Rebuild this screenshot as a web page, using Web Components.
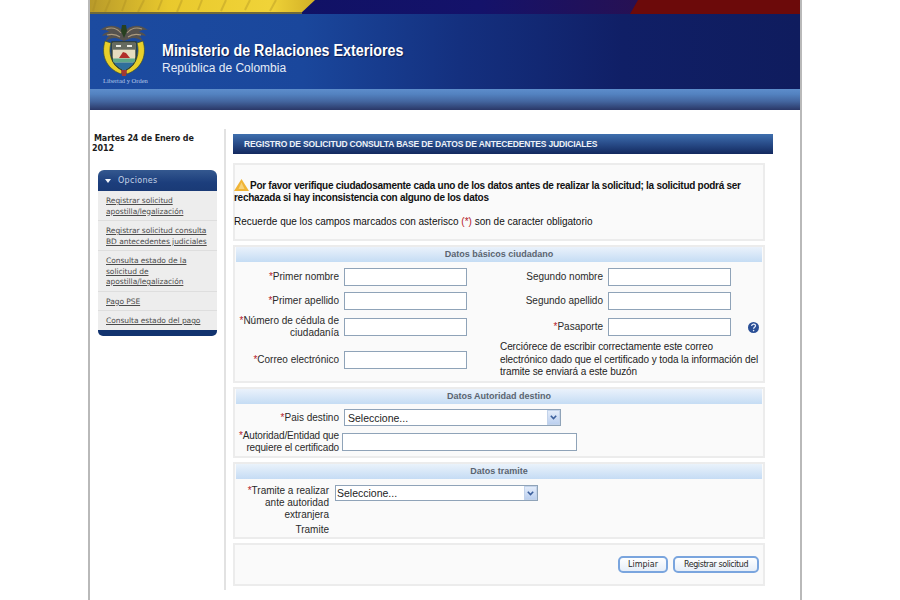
<!DOCTYPE html>
<html lang="es">
<head>
<meta charset="utf-8">
<title>Ministerio de Relaciones Exteriores</title>
<style>
  html, body { margin: 0; padding: 0; background: #fff; overflow: hidden; }
  body { font: 10px "Liberation Sans", Arial, sans-serif; color: #222; }
</style>
</head>
<body>
<gov-page>
  <gov-header slot="header"></gov-header>
  <div slot="aside">
    <date-line>Martes 24 de Enero de 2012</date-line>
    <side-menu>
      <menu-item>Registrar solicitud apostilla/legalización</menu-item>
      <menu-item>Registrar solicitud consulta BD antecedentes judiciales</menu-item>
      <menu-item>Consulta estado de la solicitud de apostilla/legalización</menu-item>
      <menu-item>Pago PSE</menu-item>
      <menu-item>Consulta estado del pago</menu-item>
    </side-menu>
  </div>
  <solicitud-form slot="main"></solicitud-form>
</gov-page>

<script>
class GovPage extends HTMLElement {
  connectedCallback() {
    this.attachShadow({ mode: 'open' });
    this.shadowRoot.innerHTML = `
      <style>
        :host { display: block; width: 710px; height: 600px; margin-left: 88px; border-left: 2px solid #b9b9b9; border-right: 2px solid #b9b9b9; }
        .body { display: flex; padding-top: 19px; }
        .aside { width: 134px; height: 461px; border-right: 2px solid #e2e2e2; flex: none; }
        .main { padding: 5px 0 0 7px; flex: 1; }
      </style>
      <slot name="header"></slot>
      <div class="body">
        <div class="aside"><slot name="aside"></slot></div>
        <div class="main"><slot name="main"></slot></div>
      </div>
    `;
  }
}

class GovHeader extends HTMLElement {
  connectedCallback() {
    this.attachShadow({ mode: 'open' });
    this.shadowRoot.innerHTML = `
      <style>
        :host { display: block; height: 110px; }
        .band { display: block; width: 710px; height: 14px; }
        .main { height: 75px; box-sizing: border-box; display: flex; background: linear-gradient(90deg, #1c4ba0 0, #1a479c 30%, #14307f 52%, #101f66 75%, #0f1c5e 100%); }
        .logo { width: 72px; flex: none; padding: 8px 0 0 9px; box-sizing: border-box; }
        .logo svg { display: block; }
        .motto { display: block; width: 60px; font: 6.500px/7px "Liberation Serif", serif; color: #b4c8ea; margin: -3px 0 0 4px; white-space: nowrap; }
        .names { padding-top: 27px; color: #fff; }
        .names b { display: block; font: bold 16px/20px "Liberation Sans", sans-serif; text-shadow: 1px 1px 1px #0b1a4c; white-space: nowrap; transform: scaleX(.893); transform-origin: left; }
        .names span { display: block; font: 12px/15px "Liberation Sans", sans-serif; color: #e6ecf7; }
        .bar { height: 21px; background: linear-gradient(#5d8dcb 0, #5382c0 25%, #43659e 60%, #2a3767 100%); }
      </style>
      <svg class="band" viewBox="0 0 710 14" preserveAspectRatio="none">
        <defs>
          <linearGradient id="navy" x1="0" x2="1"><stop offset="0" stop-color="#0c1160"/><stop offset=".55" stop-color="#14126a"/><stop offset="1" stop-color="#3a0f3c"/></linearGradient>
          <linearGradient id="gold" x1="0" x2="1"><stop offset="0" stop-color="#b89a2a"/><stop offset=".35" stop-color="#e9c92d"/><stop offset=".8" stop-color="#f0d338"/><stop offset="1" stop-color="#d2b026"/></linearGradient>
        </defs>
        <rect width="710" height="14" fill="url(#navy)"/>
        <polygon points="0,0 225,0 210,14 0,14" fill="url(#gold)"/>
        <polygon points="548,0 710,0 710,14 540,14" fill="#6c0a0a"/>
        <path d="M6 0l-3 11M20 0l-5 12M36 0l-4 11M54 0l-6 12M72 0l-4 10M92 0l-5 12M112 0l-4 10M136 0l-5 11M160 0l-5 10M186 0l-6 11" stroke="#a78a22" stroke-width="2" opacity=".35"/>
        <rect y="12" width="212" height="2" fill="#6f6a3a"/>
      </svg>
      <div class="main">
        <div class="logo">
          <svg width="50" height="58" viewBox="0 0 50 58">
            <path d="M25 10C19 2 9 2 1 8c4-.5 7 0 9 2-3 0-5 1-7 4 3-1 5-1 7 0-2 1-3 3-3 5 4-3 9-4 13-2l5 2 5-2c4-2 9-1 13 2 0-2-1-4-3-5 2-1 4-1 7 0-2-3-4-4-7-4 2-2 5-2.500 9-2-8-6-18-6-24 2z" fill="#55524e"/>
            <path d="M7 7c5-2 11-1 15 4M43 7c-5-2-11-1-15 4M8 13c4-1 9-1 13 2M42 13c-4-1-9-1-13 2" stroke="#ab9a7e" stroke-width="1.100" fill="none"/>
            <path d="M23 3h4l1 6-3 7-3-7z" fill="#27401f"/>
            <path d="M6 19C2 32 6 46 22 52l2-3C12 43 9 31 12 21z" fill="#e8cf2a" stroke="#3d4f2a" stroke-width=".7"/>
            <path d="M44 19c4 13 0 27-16 33l-2-3c12-6 15-18 12-28z" fill="#e8cf2a" stroke="#3d4f2a" stroke-width=".7"/>
            <path d="M13 20h24v15c0 7-6 11-12 14-6-3-12-7-12-14z" fill="#e6dcc0" stroke="#2f3a2a" stroke-width="1.300"/>
            <rect x="13.700" y="20.700" width="22.600" height="7" fill="#666b60"/>
            <path d="M17 24h5M28 24h5" stroke="#ecebe2" stroke-width="2"/>
            <path d="M20 36l4-6 3 1 4 5z" fill="#b22f2b"/>
            <path d="M13.700 36.500h22.600c0 1.500-.3 2.500-1 4h-20.600c-.7-1.500-1-2.500-1-4z" fill="#5fa88a"/>
            <path d="M15 40.500h20c-2 3.500-6 6-10 8-4-2-8-4.500-10-8z" fill="#2f6f9c"/>
            <path d="M22 48h6l-1 6h-4z" fill="#a33a35"/>
          </svg>
          <span class="motto">Libertad y Orden</span>
        </div>
        <div class="names">
          <b>Ministerio de Relaciones Exteriores</b>
          <span>República de Colombia</span>
        </div>
      </div>
      <div class="bar"></div>
    `;
  }
}

class DateLine extends HTMLElement {
  connectedCallback() {
    this.attachShadow({ mode: 'open' });
    this.shadowRoot.innerHTML = `
      <style>
        :host { display: block; padding: 5px 0 0 2px; width: 118px; text-indent: 2px; font: bold 8px/10px "DejaVu Sans", sans-serif; letter-spacing: -.1px; color: #1c1c1c; margin-bottom: 16px; }
      </style>
      <slot></slot>
    `;
  }
}

class SideMenu extends HTMLElement {
  connectedCallback() {
    this.attachShadow({ mode: 'open' });
    this.shadowRoot.innerHTML = `
      <style>
        :host { display: block; width: 119px; margin-left: 8px; }
        .head { height: 21px; border-radius: 6px 6px 0 0; background: linear-gradient(#34588f, #1c3e7c 60%, #1a3a76); display: flex; align-items: center; gap: 7px; padding-left: 7px; color: #c5d2e6; font: 8px "DejaVu Sans", sans-serif; letter-spacing: .3px; }
        .tri { width: 0; height: 0; border: 3.500px solid transparent; border-top: 4px solid #f2f5fa; border-bottom: 0; }
        .foot { height: 6px; border-radius: 0 0 5px 5px; background: #12336f; }
      </style>
      <div class="head"><span class="tri"></span><span>Opciones</span></div>
      <slot></slot>
      <div class="foot"></div>
    `;
  }
}

class MenuItem extends HTMLElement {
  connectedCallback() {
    this.attachShadow({ mode: 'open' });
    this.shadowRoot.innerHTML = `
      <style>
        :host { display: block; box-sizing: border-box; background: #ededed; border-bottom: 1px solid #dedede; padding: 5px 8px 3px 8px; font: 7.500px/10.500px "DejaVu Sans", sans-serif; letter-spacing: -.05px; color: #4c4c4c; text-decoration: underline; }
        :host(:last-of-type) { border-bottom: 0; }
      </style>
      <slot></slot>
    `;
  }
}

class FormPanel extends HTMLElement {
  connectedCallback() {
    this.attachShadow({ mode: 'open' });
    const title = this.getAttribute('heading');
    this.shadowRoot.innerHTML = `
      <style>
        :host { display: block; width: 532px; box-sizing: border-box; background: #fafafa; border: 2px solid #ececec; margin-bottom: 4px; }
        .head { height: 15px; margin: 0 1px; background: linear-gradient(#eaf2fb, #c5dcf4); color: #5a6470; font: bold 9px/15px "Liberation Sans", sans-serif; text-align: center; }
      </style>
      ${title ? `<div class="head">${title}</div>` : ''}
      <slot></slot>
    `;
  }
}

class TextBox extends HTMLElement {
  connectedCallback() {
    this.attachShadow({ mode: 'open' });
    this.shadowRoot.innerHTML = `
      <style>
        :host { display: block; width: var(--w, 123px); }
        input { display: block; box-sizing: border-box; width: 100%; height: 18px; margin: 0; padding: 0 3px; background: #fff; border: 1px solid #8fa3b8; border-radius: 0; outline: 0; font: 10px "Liberation Sans", sans-serif; }
      </style>
      <input type="text">
    `;
  }
}

class ComboBox extends HTMLElement {
  connectedCallback() {
    this.attachShadow({ mode: 'open' });
    this.shadowRoot.innerHTML = `
      <style>
        :host { display: block; position: relative; width: var(--w, 217px); height: var(--h, 17px); }
        select { display: block; box-sizing: border-box; width: 100%; height: 100%; margin: 0; padding: 0 0 0 var(--pad, 3px); appearance: none; background: #fff; border: 1px solid #8fa3b8; border-radius: 0; font: 10.500px "Liberation Sans", sans-serif; color: #222; }
        .btn { position: absolute; top: 1px; right: 1px; bottom: 1px; width: 13px; background: linear-gradient(#e3ecfa, #bcd0ef); border: 1px solid #c3d3ea; box-sizing: border-box; display: flex; align-items: center; justify-content: center; }
      </style>
      <select><option>Seleccione...</option></select>
      <span class="btn"><svg width="7" height="5" viewBox="0 0 7 5"><path d="M.8.8l2.700 2.700L6.200.8" fill="none" stroke="#3c5f9c" stroke-width="1.600"/></svg></span>
    `;
  }
}

class FieldLabel extends HTMLElement {
  connectedCallback() {
    this.attachShadow({ mode: 'open' });
    const star = this.hasAttribute('required') ? '<span class="star">*</span>' : '';
    this.shadowRoot.innerHTML = `
      <style>
        :host { display: block; text-align: right; font: 10px/12px "Liberation Sans", sans-serif; color: #2a2a2a; }
        .star { color: #b3202a; }
      </style>
      ${star}<slot></slot>
    `;
  }
}

class PillButton extends HTMLElement {
  connectedCallback() {
    this.attachShadow({ mode: 'open' });
    this.shadowRoot.innerHTML = `
      <style>
        :host { display: block; }
        button { display: block; box-sizing: border-box; width: var(--w, 50px); height: 17px; padding: 0; background: linear-gradient(#fff, #e6eef8); border: 2px solid #7aa5de; border-radius: 5px; font: 8px "DejaVu Sans", sans-serif; letter-spacing: var(--ls, 0); color: #2a2a2a; }
      </style>
      <button type="button"><slot></slot></button>
    `;
  }
}

class SolicitudForm extends HTMLElement {
  connectedCallback() {
    this.attachShadow({ mode: 'open' });
    this.shadowRoot.innerHTML = `
      <style>
        :host { display: block; }
        .title { width: 540px; height: 20px; margin-bottom: 9px; box-sizing: border-box; padding-left: 11px; background: linear-gradient(#3f6fae, #2a4f8c 45%, #13295f); color: #eef2f8; font: bold 8.500px/20px "Liberation Sans", sans-serif; letter-spacing: -.16px; white-space: nowrap; }
        .notice { height: 74px; padding: 14px 0 0; margin-left: -1px; box-sizing: border-box; font-size: 10px; line-height: 12px; color: #111; }
        .notice b { display: block; margin-bottom: 12px; letter-spacing: -.27px; }
        .notice svg { vertical-align: -2px; margin-right: 1px; }
        .notice em { color: #b3202a; font-style: normal; }
        .basic { display: grid; grid-template-columns: 103px 123px 131px 123px 1fr; grid-template-rows: 24px 23px 30px 36px; column-gap: 5px; align-items: center; padding: 3px 1px; }
        .note { grid-column: 3 / 6; padding-left: 28px; font-size: 10px; line-height: 12.500px; letter-spacing: -.08px; color: #222; }
        .help { margin-left: 12px; }
        .auth { display: grid; grid-template-columns: 103px 1fr; grid-template-rows: 21px 28px; column-gap: 5px; align-items: center; padding: 3px 1px 0; }
        .auth .wide { margin-left: -2px; }
        .auth .tight { letter-spacing: -.13px; }
        .tram { display: grid; grid-template-columns: 93px 1fr; grid-template-rows: 36px 12px; row-gap: 3px; column-gap: 6px; padding: 6px 1px 1px; }
        .tram .lab2 { grid-column: 1; }
        .actions { height: 39px; display: flex; justify-content: flex-end; align-items: flex-start; gap: 5px; padding: 11px 4px 0 0; box-sizing: border-box; }
      </style>
      <div class="title">REGISTRO DE SOLICITUD CONSULTA BASE DE DATOS DE ANTECEDENTES JUDICIALES</div>
      <form-panel>
        <div class="notice">
          <b><svg width="15" height="12" viewBox="0 0 15 12"><path d="M7.500 0L15 12H0z" fill="#f0b436"/><path d="M7.500 3.500L10.500 10h-6z" fill="#f7d27a"/></svg>Por favor verifique ciudadosamente cada uno de los datos antes de realizar la solicitud; la solicitud podrá ser rechazada si hay inconsistencia con alguno de los datos</b>
          Recuerde que los campos marcados con asterisco <em>(*)</em> son de caracter obligatorio
        </div>
      </form-panel>
      <form-panel heading="Datos básicos ciudadano">
        <div class="basic">
          <field-label required>Primer nombre</field-label><text-box></text-box>
          <field-label>Segundo nombre</field-label><text-box></text-box><span></span>
          <field-label required>Primer apellido</field-label><text-box></text-box>
          <field-label>Segundo apellido</field-label><text-box></text-box><span></span>
          <field-label required>Número de cédula de ciudadanía</field-label><text-box></text-box>
          <field-label required>Pasaporte</field-label><text-box></text-box>
          <svg class="help" width="11" height="11" viewBox="0 0 11 11"><circle cx="5.500" cy="5.500" r="5.500" fill="#2a4f96"/><path d="M3.600 4c.2-2.400 3.900-2.400 3.900-.2 0 1.500-1.900 1.500-1.900 3" fill="none" stroke="#e8eefb" stroke-width="1.300"/><circle cx="5.600" cy="8.600" r=".8" fill="#e8eefb"/></svg>
          <field-label required>Correo electrónico</field-label><text-box></text-box>
          <div class="note">Cerciórece de escribir correctamente este correo electrónico dado que el certificado y toda la información del tramite se enviará a este buzón</div>
        </div>
      </form-panel>
      <form-panel heading="Datos Autoridad destino">
        <div class="auth">
          <field-label required>Pais destino</field-label><combo-box></combo-box>
          <field-label class="tight" required>Autoridad/Entidad que requiere el certificado</field-label><text-box class="wide" style="--w:235px"></text-box>
        </div>
      </form-panel>
      <form-panel heading="Datos tramite">
        <div class="tram">
          <field-label required>Tramite a realizar ante autoridad extranjera</field-label><combo-box style="--w:203px;--h:16px;--pad:1px"></combo-box>
          <field-label class="lab2">Tramite</field-label>
        </div>
      </form-panel>
      <form-panel>
        <div class="actions">
          <pill-button>Limpiar</pill-button>
          <pill-button style="--w:86px;--ls:-.42px">Registrar solicitud</pill-button>
        </div>
      </form-panel>
    `;
  }
}

customElements.define('gov-page', GovPage);
customElements.define('gov-header', GovHeader);
customElements.define('date-line', DateLine);
customElements.define('side-menu', SideMenu);
customElements.define('menu-item', MenuItem);
customElements.define('form-panel', FormPanel);
customElements.define('text-box', TextBox);
customElements.define('combo-box', ComboBox);
customElements.define('field-label', FieldLabel);
customElements.define('pill-button', PillButton);
customElements.define('solicitud-form', SolicitudForm);
</script>
</body>
</html>
